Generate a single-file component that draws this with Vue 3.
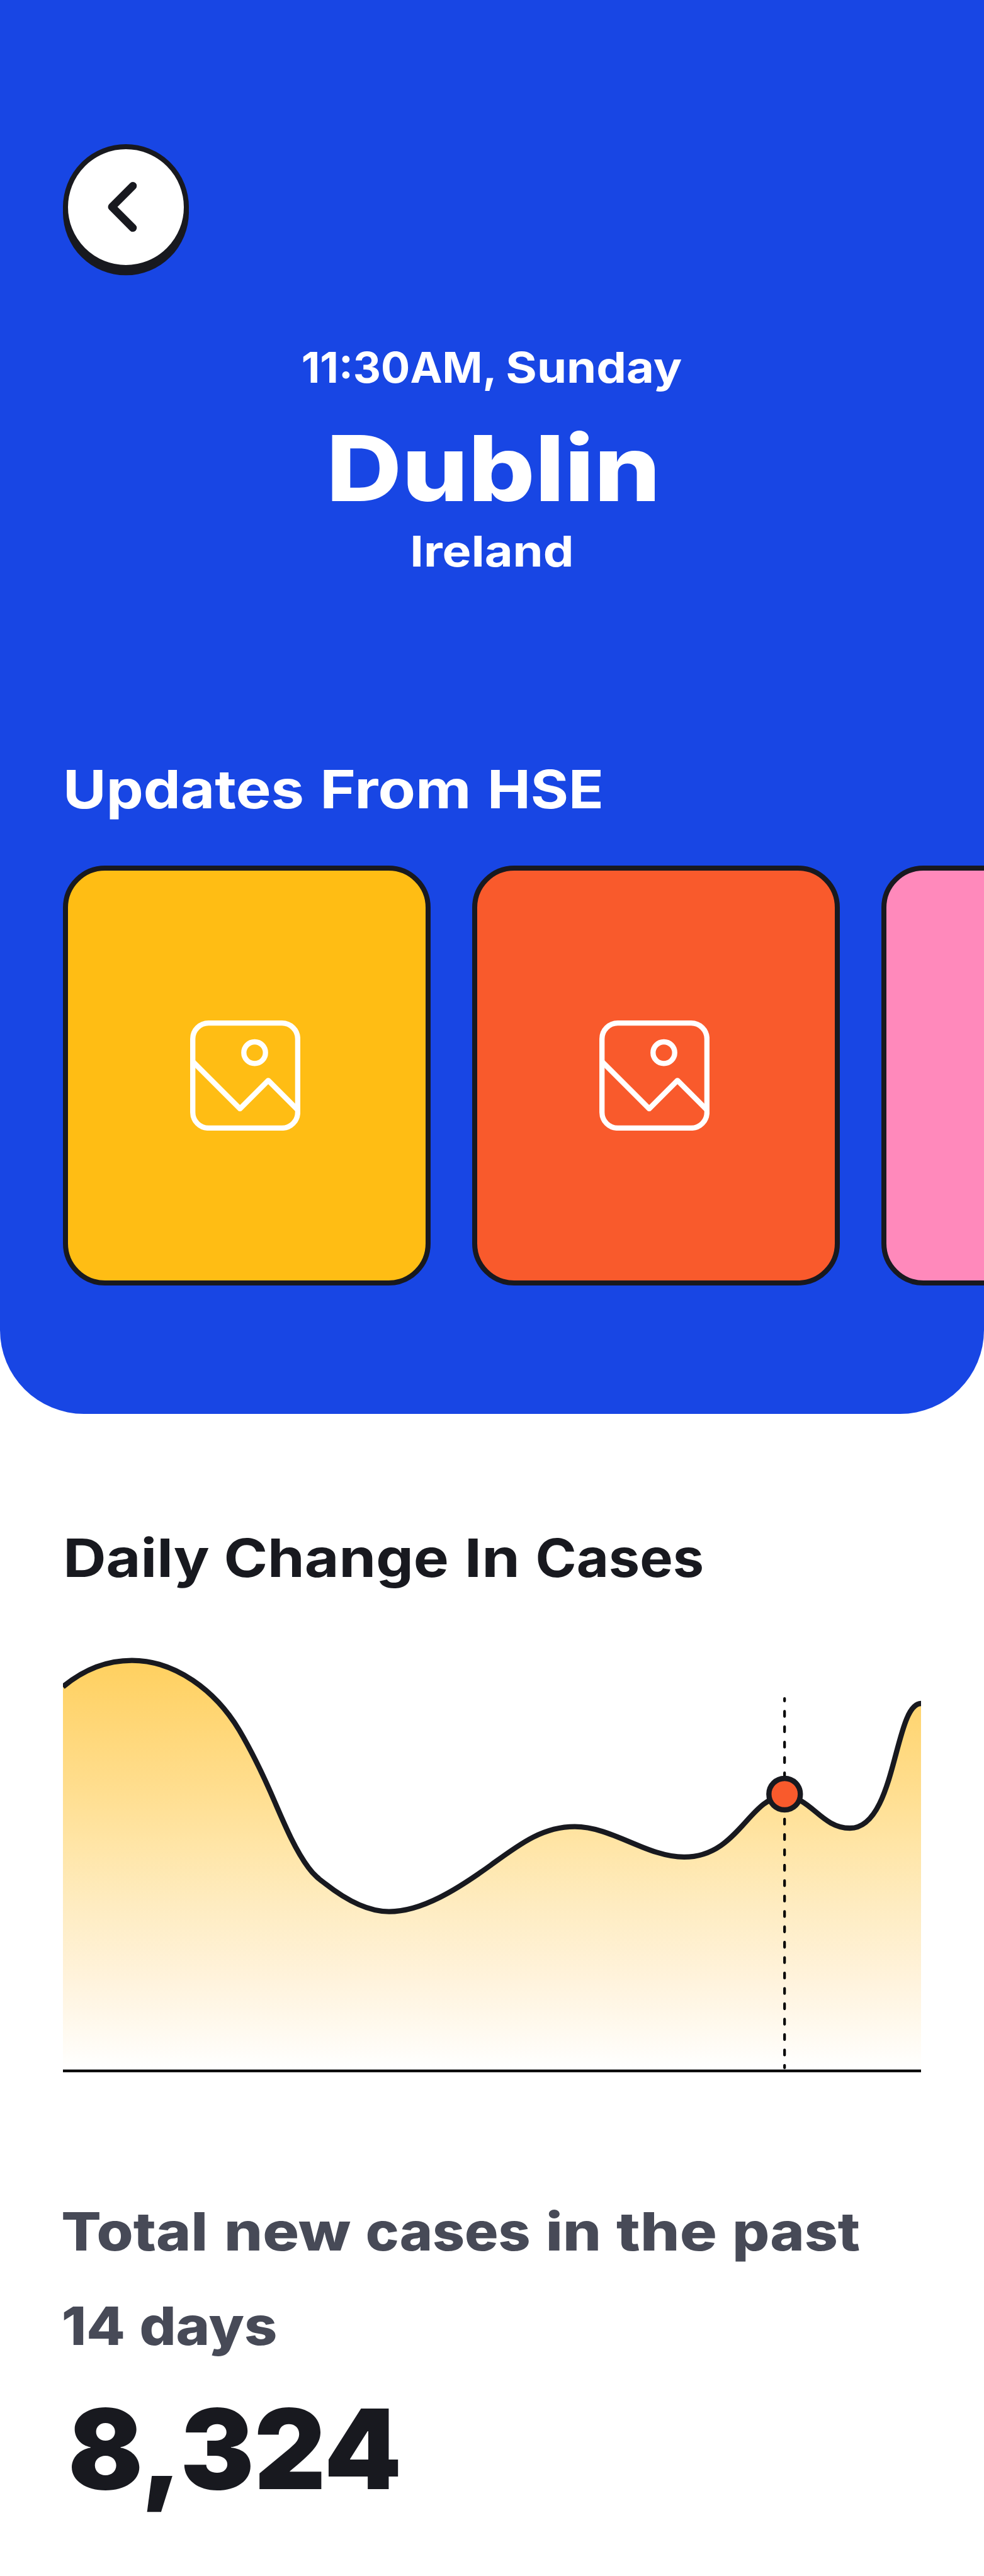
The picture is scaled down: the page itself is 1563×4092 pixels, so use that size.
<script setup>
import { h } from 'vue'

// One line of text whose words are fitted to fixed ink widths.
// word: [text, inkLeft, inkRight, leftBearing(em), rightBearing(em)]
const FitLine = (props) =>
  h(
    'svg',
    { width: 1563, height: props.height, viewBox: `0 0 1563 ${props.height}`, class: 'fit-line' },
    [
      h(
        'text',
        { y: props.baseline, 'font-size': props.size, 'font-weight': props.weight, fill: 'currentColor' },
        props.words.flatMap(([t, a, b, l, r], i) => [
          i ? ' ' : '',
          h(
            'tspan',
            {
              x: a - l * props.size,
              textLength: b - a + (l + r) * props.size,
              lengthAdjust: 'spacingAndGlyphs',
            },
            t
          ),
        ])
      ),
    ]
  )
FitLine.props = ['height', 'baseline', 'size', 'weight', 'words']

const time = [
  ['11:30AM,', 480.8, 782.6, 0.03, 0.07],
  ['Sunday', 806.4, 1082.3, 0.045, 0.015],
]
const city = [['Dublin', 528.5, 1040.6, 0.07, 0.06]]
const country = [['Ireland', 656.4, 907, 0.075, 0.065]]
const updates = [
  ['Updates', 106.4, 480, 0.075, 0.035],
  ['From', 514.5, 743, 0.075, 0.065],
  ['HSE', 780.3, 954.8, 0.075, 0.05],
]
const daily = [
  ['Daily', 107, 331.5, 0.08, 0.015],
  ['Change', 359.2, 709.5, 0.045, 0.04],
  ['In', 744.6, 820.4, 0.08, 0.065],
  ['Cases', 854.2, 1115.2, 0.045, 0.035],
]
const total1 = [
  ['Total', 100.2, 325, 0.035, 0.06],
  ['new', 361.2, 556.4, 0.06, 0.01],
  ['cases', 584.2, 840, 0.04, 0.03],
  ['in', 871.3, 950.4, 0.055, 0.055],
  ['the', 980.7, 1135.6, 0.02, 0.04],
  ['past', 1168.4, 1363.7, 0.06, 0.03],
]
const total2 = [
  ['14', 100.2, 196.2, 0.03, 0.03],
  ['days', 224.8, 437.8, 0.04, 0.03],
]
const count = [['8,324', 112.8, 633, 0.027, 0.03]]

const cards = [
  { color: '#ffbd14' },
  { color: '#f95a2c' },
  { color: '#ff89bb' },
]

const curve =
  'M100 2679.5C133 2652 170 2637.6 209.5 2637.6C278 2637.6 342 2685 380 2748.3' +
  'C404 2789 421 2826 438.3 2866.7C454 2903 470 2940 490 2966.7' +
  'C499 2979 507 2985 517 2992.5C552 3020 585 3036.6 618 3036.6' +
  'C670 3036.6 727 3001 780 2962.5C826 2929 862 2901.7 913 2901.7' +
  'C972 2901.7 1028 2949.9 1086.7 2949.9C1173 2949.9 1190 2853.5 1246 2853.5' +
  'C1288 2853.5 1304 2904 1350 2904C1424 2904 1420 2706 1463 2706'
</script>

<template>
  <div class="page">
    <header class="hero">
      <button class="back" aria-label="Back">
        <svg width="200" height="200" viewBox="0 0 200 200">
          <path d="M111 66.3L77.8 99.7L111 133" />
        </svg>
      </button>
      <p class="time"><FitLine :height="90" :baseline="68.3" :size="68" :weight="650" :words="time" /></p>
      <h1 class="city"><FitLine :height="150" :baseline="126" :size="144.5" :weight="800" :words="city" /></h1>
      <p class="country"><FitLine :height="90" :baseline="65" :size="68" :weight="650" :words="country" /></p>
      <h2 class="updates"><FitLine :height="110" :baseline="83.7" :size="84.5" :weight="650" :words="updates" /></h2>
      <div class="cards">
        <article v-for="c in cards" :key="c.color" class="card" :style="{ background: c.color }">
          <svg width="175" height="175" viewBox="0 0 175 175">
            <rect x="4.2" y="4.2" width="166.7" height="166.7" rx="25" />
            <circle cx="102.5" cy="51.2" r="17.2" />
            <path d="M4.2 65.2L79.2 140.2L124.1 95.3L171 142.2" />
          </svg>
        </article>
      </div>
    </header>

    <main>
      <h2 class="daily"><FitLine :height="120" :baseline="84.7" :size="84.5" :weight="680" :words="daily" /></h2>
      <svg class="chart" width="1363" height="700" viewBox="100 2600 1363 700">
        <defs>
          <linearGradient id="fade" gradientUnits="userSpaceOnUse" x1="0" y1="2637" x2="0" y2="3287">
            <stop offset="0" stop-color="#ffd05f" />
            <stop offset="0.3" stop-color="#ffdd8c" />
            <stop offset="0.45" stop-color="#ffe5a6" />
            <stop offset="0.6" stop-color="#feecc1" />
            <stop offset="0.78" stop-color="#fff3dc" />
            <stop offset="0.91" stop-color="#fffaf0" />
            <stop offset="1" stop-color="#ffffff" />
          </linearGradient>
        </defs>
        <path :d="curve + 'V3288H100Z'" fill="url(#fade)" />
        <path :d="curve" class="line" />
        <path d="M100 3289.7H1463" class="axis" />
        <path d="M1246.2 2698V3284.7" class="marker" />
        <circle cx="1246.3" cy="2850" r="25" class="dot" />
      </svg>
      <p class="total">
        <FitLine :height="120" :baseline="85.3" :size="84.5" :weight="800" :words="total1" />
        <FitLine class="second" :height="120" :baseline="85.2" :size="84.5" :weight="800" :words="total2" />
      </p>
      <p class="count"><FitLine :height="190" :baseline="154.2" :size="176" :weight="900" :words="count" /></p>
    </main>
  </div>
</template>

<style>
body {
  margin: 0;
  background: #fff;
}
.fit-line {
  display: block;
  overflow: visible;
}
</style>

<style scoped>
.page {
  width: 1563px;
  height: 4092px;
  overflow: hidden;
  background: #fff;
  color: #18191f;
  font-family: Inter, 'Open Sans', sans-serif;
}
h1,
h2,
p {
  margin: 0;
}
.hero {
  box-sizing: border-box;
  height: 2246px;
  padding-top: 229.3px;
  overflow: hidden;
  background: #1846e4;
  border-radius: 0 0 133.4px 133.4px;
  color: #fff;
}
.back {
  display: block;
  box-sizing: border-box;
  width: 200px;
  height: 200px;
  margin: 0 0 0 100px;
  padding: 0;
  border: 8.34px solid #18191f;
  border-radius: 50%;
  background: #fff;
  box-shadow: 0 8.34px 0 #18191f;
}
.back svg {
  display: block;
  margin: -8px;
}
.back path {
  fill: none;
  stroke: #18191f;
  stroke-width: 12.5;
  stroke-linecap: round;
  stroke-linejoin: round;
}
.time {
  margin-top: 110.7px;
}
.city {
  margin-top: 40px;
}
.country {
  margin-top: 15px;
}
.updates {
  margin-top: 275px;
}
.cards {
  display: flex;
  gap: 66.7px;
  margin: 65.2px 0 0 100px;
}
.card {
  box-sizing: border-box;
  display: flex;
  flex: none;
  align-items: center;
  justify-content: center;
  width: 583.5px;
  height: 666.8px;
  border: 8.34px solid #18191f;
  border-radius: 66.7px;
}
.card svg {
  margin-right: 4px;
  fill: none;
  stroke: #fff;
  stroke-width: 8.34;
  stroke-linejoin: round;
}
.daily {
  padding-top: 174px;
}
.chart {
  display: block;
  margin: 60px 0 0 100px;
}
.line {
  fill: none;
  stroke: #18191f;
  stroke-width: 8.34;
}
.axis {
  stroke: #000;
  stroke-width: 4.2;
}
.marker {
  stroke: #000;
  stroke-width: 4.2;
  stroke-linecap: round;
  stroke-dasharray: 8.15 16.3;
  stroke-dashoffset: 4.07;
}
.dot {
  fill: #f95a2c;
  stroke: #18191f;
  stroke-width: 8.34;
}
.total {
  margin-top: 190px;
  color: #474a57;
}
.second {
  margin-top: 30px;
}
.count {
  margin-top: 40px;
}
</style>
